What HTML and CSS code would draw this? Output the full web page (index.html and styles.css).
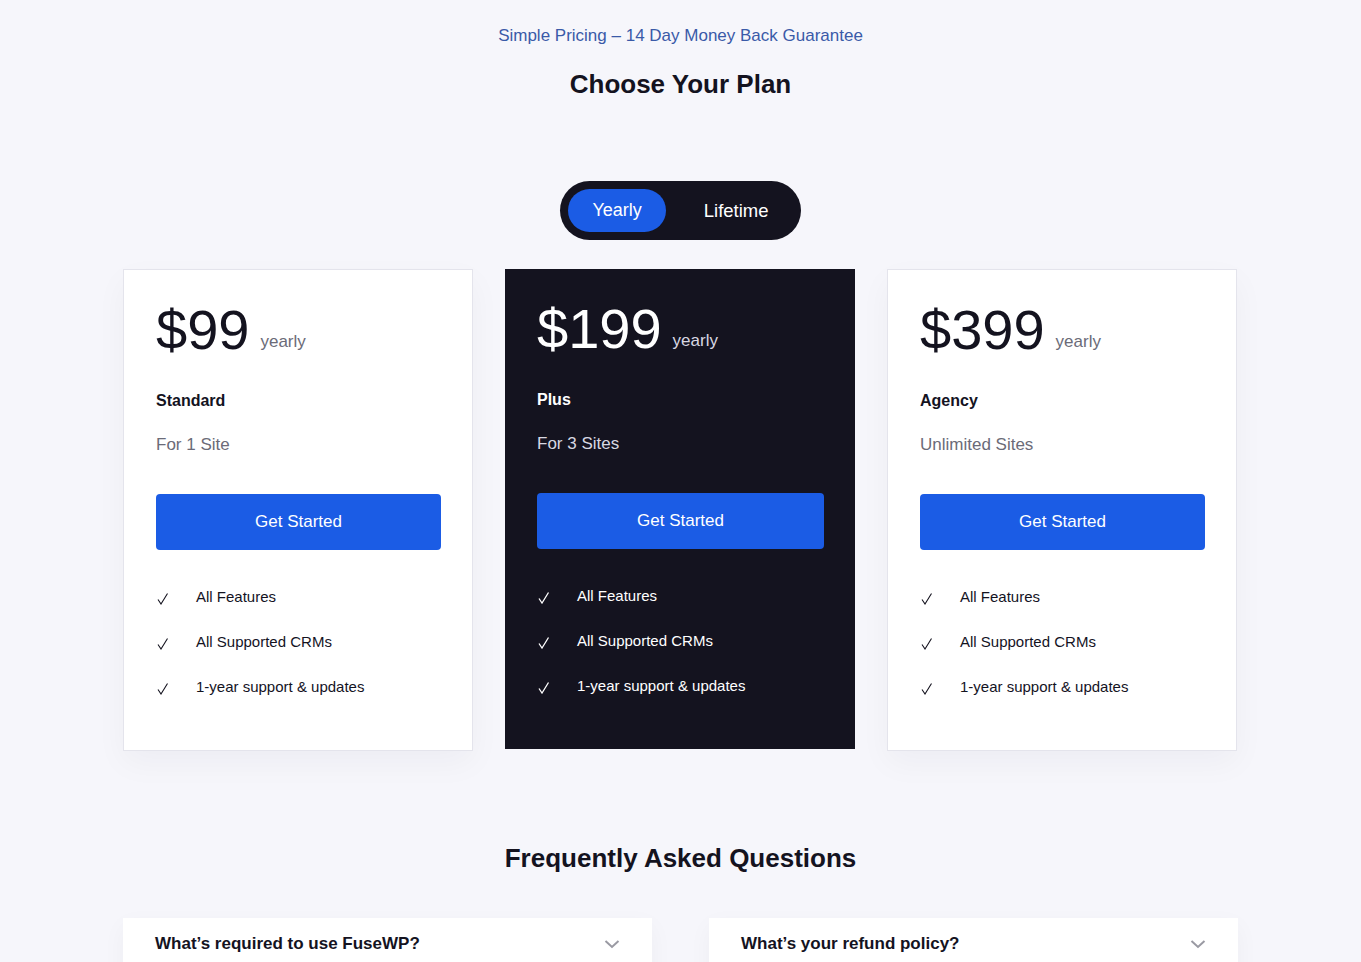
FILE: index.html
```html
<!DOCTYPE html>
<html lang="en">
<head>
<meta charset="utf-8">
<title>Pricing</title>
<link rel="stylesheet" href="styles.css">
</head>
<body>
<main class="page">
  <p class="eyebrow">Simple Pricing – 14 Day Money Back Guarantee</p>
  <h1 class="title">Choose Your Plan</h1>

  <div class="toggle-wrap">
    <div class="toggle">
      <button class="toggle-btn active">Yearly</button>
      <button class="toggle-btn lifetime">Lifetime</button>
    </div>
  </div>

  <section class="plans">
    <div class="card">
      <div class="price-row"><span class="price">$99</span><span class="period">yearly</span></div>
      <div class="plan-name">Standard</div>
      <div class="plan-sites">For 1 Site</div>
      <a class="cta">Get Started</a>
      <ul class="features">
        <li><svg class="check" width="12" height="12" viewBox="0 0 12 12"><path d="M1 6.5 L4 11 L10.5 0.5" fill="none" stroke="currentColor" stroke-width="1.1"/></svg>All Features</li>
        <li><svg class="check" width="12" height="12" viewBox="0 0 12 12"><path d="M1 6.5 L4 11 L10.5 0.5" fill="none" stroke="currentColor" stroke-width="1.1"/></svg>All Supported CRMs</li>
        <li><svg class="check" width="12" height="12" viewBox="0 0 12 12"><path d="M1 6.5 L4 11 L10.5 0.5" fill="none" stroke="currentColor" stroke-width="1.1"/></svg>1-year support &amp; updates</li>
      </ul>
    </div>
    <div class="card card-dark">
      <div class="price-row"><span class="price">$199</span><span class="period">yearly</span></div>
      <div class="plan-name">Plus</div>
      <div class="plan-sites">For 3 Sites</div>
      <a class="cta">Get Started</a>
      <ul class="features">
        <li><svg class="check" width="12" height="12" viewBox="0 0 12 12"><path d="M1 6.5 L4 11 L10.5 0.5" fill="none" stroke="currentColor" stroke-width="1.3"/></svg>All Features</li>
        <li><svg class="check" width="12" height="12" viewBox="0 0 12 12"><path d="M1 6.5 L4 11 L10.5 0.5" fill="none" stroke="currentColor" stroke-width="1.3"/></svg>All Supported CRMs</li>
        <li><svg class="check" width="12" height="12" viewBox="0 0 12 12"><path d="M1 6.5 L4 11 L10.5 0.5" fill="none" stroke="currentColor" stroke-width="1.3"/></svg>1-year support &amp; updates</li>
      </ul>
    </div>
    <div class="card">
      <div class="price-row"><span class="price">$399</span><span class="period">yearly</span></div>
      <div class="plan-name">Agency</div>
      <div class="plan-sites">Unlimited Sites</div>
      <a class="cta">Get Started</a>
      <ul class="features">
        <li><svg class="check" width="12" height="12" viewBox="0 0 12 12"><path d="M1 6.5 L4 11 L10.5 0.5" fill="none" stroke="currentColor" stroke-width="1.1"/></svg>All Features</li>
        <li><svg class="check" width="12" height="12" viewBox="0 0 12 12"><path d="M1 6.5 L4 11 L10.5 0.5" fill="none" stroke="currentColor" stroke-width="1.1"/></svg>All Supported CRMs</li>
        <li><svg class="check" width="12" height="12" viewBox="0 0 12 12"><path d="M1 6.5 L4 11 L10.5 0.5" fill="none" stroke="currentColor" stroke-width="1.1"/></svg>1-year support &amp; updates</li>
      </ul>
    </div>
  </section>

  <h2 class="faq-title">Frequently Asked Questions</h2>
  <section class="faq">
    <div class="faq-item">
      <span class="faq-q">What’s required to use FuseWP?</span>
      <svg class="chev" width="16" height="10" viewBox="0 0 16 10"><path d="M1.5 2 L8 8 L14.5 2" fill="none" stroke="#9a9aa3" stroke-width="2"/></svg>
    </div>
    <div class="faq-item">
      <span class="faq-q">What’s your refund policy?</span>
      <svg class="chev" width="16" height="10" viewBox="0 0 16 10"><path d="M1.5 2 L8 8 L14.5 2" fill="none" stroke="#9a9aa3" stroke-width="2"/></svg>
    </div>
  </section>
</main>
</body>
</html>
```

FILE: styles.css
```css
* { box-sizing: border-box; }
html, body { margin: 0; padding: 0; }
body {
  background: #f6f6fb;
  font-family: "Liberation Sans", Arial, sans-serif;
  color: #14131f;
}
.page {
  width: 1115px;
  margin: 0 auto;
  padding-top: 24px;
}
.eyebrow {
  margin: 0;
  text-align: center;
  font-size: 17px;
  line-height: 24px;
  color: #3a5aa8;
}
.title {
  margin: 20px 0 0;
  text-align: center;
  font-size: 26px;
  line-height: 32px;
  font-weight: 700;
  color: #14131f;
}
.toggle-wrap {
  display: flex;
  justify-content: center;
  margin-top: 81px;
}
.toggle {
  display: flex;
  gap: 13px;
  padding: 8px;
  background: #14131f;
  border-radius: 30px;
  height: 59px;
}
.toggle-btn {
  border: 0;
  background: transparent;
  color: #fff;
  font-family: "Liberation Sans", Arial, sans-serif;
  font-size: 18px;
  padding: 0 24px;
  height: 43px;
  border-radius: 22px;
}
.toggle-btn.lifetime {
  padding: 0 24px 0 25px;
  font-size: 18.5px;
}
.toggle-btn.active { background: #1b5ce5; }

.plans {
  display: grid;
  grid-template-columns: 350px 350px 350px;
  column-gap: 32px;
  justify-content: start;
  align-items: start;
  margin-top: 29px;
}
.card {
  background: #fff;
  border: 1px solid #e4e4ec;
  box-shadow: 0 12px 30px rgba(20, 20, 50, 0.04);
  padding: 32px 31px 53px 32px;
  display: flex;
  flex-direction: column;
}
.card-dark {
  background: #14131f;
  border: 0;
  box-shadow: none;
  color: #fff;
}
.price-row {
  display: flex;
  align-items: baseline;
  height: 56px;
  line-height: 1;
}
.price {
  font-size: 56px;
  color: #14131f;
}
.card-dark .price { color: #fff; }
.period {
  margin-left: 11px;
  font-size: 17px;
  color: #6b6b78;
  transform: translateY(-2px);
}
.card-dark .period { color: #d8d8e2; }
.plan-name {
  margin-top: 33px;
  font-size: 16px;
  line-height: 20px;
  font-weight: 700;
}
.plan-sites {
  margin-top: 24px;
  font-size: 17px;
  line-height: 20px;
  color: #6b6b78;
}
.card-dark .plan-sites { color: #d8d8e2; }
.cta {
  margin-top: 39px;
  height: 56px;
  border-radius: 4px;
  background: #1b5ce5;
  color: #fff;
  display: flex;
  align-items: center;
  justify-content: center;
  font-size: 17px;
}
.features {
  list-style: none;
  margin: 37px 0 0;
  padding: 0;
  display: flex;
  flex-direction: column;
  gap: 25px;
}
.features li {
  display: flex;
  align-items: center;
  height: 20px;
  font-size: 15px;
  line-height: 20px;
  color: #14131f;
}
.card-dark .features li { color: #fff; }
.check {
  flex: none;
  margin-left: 1px;
  margin-right: 27px;
  margin-top: 4px;
  color: #14131f;
}
.card-dark .check { color: #fff; }

.faq-title {
  margin: 91px 0 0;
  text-align: center;
  font-size: 26px;
  line-height: 32px;
  font-weight: 700;
}
.faq {
  margin-top: 44px;
  display: grid;
  grid-template-columns: 529px 529px;
  justify-content: space-between;
}
.faq-item {
  background: #fff;
  box-shadow: 0 8px 24px rgba(20, 20, 50, 0.04);
  padding: 16px 32px 24px 32px;
  display: flex;
  align-items: center;
  justify-content: space-between;
}
.faq-q {
  font-size: 17px;
  line-height: 20px;
  font-weight: 700;
  color: #14131f;
}
.chev { display: block; }
```
